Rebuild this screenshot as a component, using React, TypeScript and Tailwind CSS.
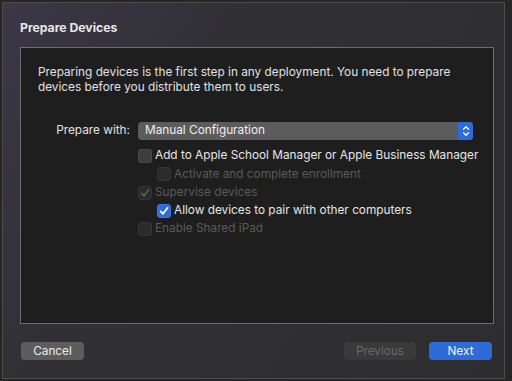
import React from "react";

const font = { fontFamily: "Inter, 'Noto Sans', sans-serif" };

function Check({
  checked,
  disabled,
  blue,
}: {
  checked?: boolean;
  disabled?: boolean;
  blue?: boolean;
}) {
  const box = blue
    ? "bg-[#2f6bdb] border-[#3a76e4]"
    : disabled
    ? "bg-[#2b2b2b] border-[#353535]"
    : "bg-[#3e3e3e] border-[#4a4a4a]";
  return (
    <div
      className={`flex h-[14px] w-[14px] shrink-0 items-center justify-center rounded-[3px] border ${box}`}
    >
      {checked && (
        <svg width="10" height="10" viewBox="0 0 10 10">
          <path
            d="M1.6 5.3 L4 7.8 L8.6 1.8"
            fill="none"
            stroke={blue ? "#ffffff" : "#5d5d5d"}
            strokeWidth="1.7"
            strokeLinecap="round"
            strokeLinejoin="round"
          />
        </svg>
      )}
    </div>
  );
}

function Row({
  label,
  indent,
  checked,
  disabled,
  blue,
}: {
  label: string;
  indent?: boolean;
  checked?: boolean;
  disabled?: boolean;
  blue?: boolean;
}) {
  return (
    <div
      className={`flex h-[18.3px] items-center gap-[3px] whitespace-nowrap ${indent ? "pl-[19px]" : ""}`}
    >
      <Check checked={checked} disabled={disabled} blue={blue} />
      <span className={disabled ? "text-[#5a5a5a]" : "text-[#e6e6e6]"}>{label}</span>
    </div>
  );
}

export default function App() {
  return (
    <div
      className="h-[381px] w-[512px] overflow-hidden bg-[#262626] pl-[2px] pr-[7px] pt-[2px] pb-[2px] text-[12px]"
      style={font}
    >
      <div className="flex h-full w-full flex-col border border-[#4c4c4c] bg-[linear-gradient(120deg,#3b3748_0%,#313034_35%,#2d2d2f_100%)]">
        <div className="flex h-[44px] items-center pl-[17px] pt-[6px] text-[12.2px] font-bold text-[#e8e8e8]">
          Prepare Devices
        </div>

        <div className="ml-[17px] mr-[10px] flex h-[277px] flex-col border border-[#6e6e6e] bg-[#1e1e1e] pl-[17px] pt-[17px] text-[11.8px]">
          <p className="whitespace-nowrap leading-[15px] text-[#e2e2e2]">
            Preparing devices is the first step in any deployment. You need to prepare
            <br />
            devices before you distribute them to users.
          </p>

          <div className="mt-[27px] flex items-center">
            <span className="w-[100px] pr-[8px] text-right text-[#e2e2e2]">Prepare with:</span>
            <div className="flex h-[18px] w-[335px] items-center overflow-hidden rounded-[4px] bg-[#5c5c5c]">
              <span className="flex-1 pl-[7px] text-[#efefef]">Manual Configuration</span>
              <div className="flex h-full w-[15px] items-center justify-center bg-[#2f6bdb]">
                <svg width="8" height="12" viewBox="0 0 8 12">
                  <path
                    d="M1.5 4.2 L4 1.8 L6.5 4.2 M1.5 7.8 L4 10.2 L6.5 7.8"
                    fill="none"
                    stroke="#ffffff"
                    strokeWidth="1.3"
                    strokeLinecap="round"
                    strokeLinejoin="round"
                  />
                </svg>
              </div>
            </div>
          </div>

          <div className="ml-[100px] mt-[7px] flex flex-col">
            <Row label="Add to Apple School Manager or Apple Business Manager" />
            <Row label="Activate and complete enrollment" indent disabled />
            <Row label="Supervise devices" checked disabled />
            <Row label="Allow devices to pair with other computers" indent checked blue />
            <Row label="Enable Shared iPad" disabled />
          </div>
        </div>

        <div className="flex items-center pl-[18px] pr-[12px] pt-[18px] text-[11.8px]">
          <button className="h-[18px] w-[63px] rounded-[4px] bg-[#5d5d5d] leading-[18px] text-[#ececec]">
            Cancel
          </button>
          <div className="flex-1" />
          <button className="h-[18px] w-[72px] rounded-[4px] bg-[#3a3a3a] leading-[18px] text-[#686868]">
            Previous
          </button>
          <button className="ml-[13px] h-[18px] w-[63px] rounded-[4px] bg-[#2e6ad8] leading-[18px] text-[#f4f4f4]">
            Next
          </button>
        </div>
      </div>
    </div>
  );
}
